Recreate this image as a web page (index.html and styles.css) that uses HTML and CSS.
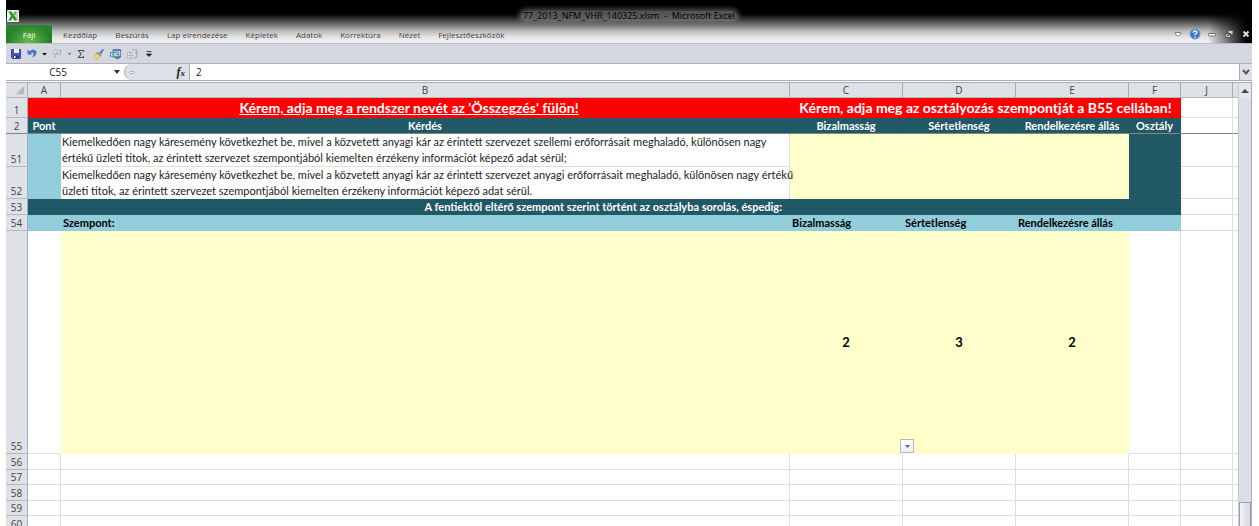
FILE: index.html
```html
<!DOCTYPE html>
<html lang="hu">
<head>
<meta charset="utf-8">
<title>77_2013_NFM_VHR_140325.xlsm - Microsoft Excel</title>
<link rel="stylesheet" href="styles.css">
</head>
<body>
<div class="window">
  <header class="top">
    <div class="titlebar">
      <svg class="logo" viewBox="0 0 12 12" aria-hidden="true"><rect width="12" height="12" rx="1" fill="#e9f5e7"/><rect x="8" y="2" width="3" height="8" fill="#b8dcb4"/><path d="M1.5 1.5h3l1.6 2.7L7.700 1.500h2.300L7.500 5.800l2.800 4.700H7.200L5.600 7.700 4 10.500H1.200l2.900-4.600z" fill="#2c9138"/><path d="M6 5.800L8 2h1.800L7.500 5.800z" fill="#75c34b"/></svg>
      <h1 class="title">77_2013_NFM_VHR_140325.xlsm&nbsp; -&nbsp; Microsoft Excel</h1>
    </div>
    <nav class="tabs">
      <button class="file">Fájl</button>
      <button>Kezdőlap</button><button>Beszúrás</button><button>Lap elrendezése</button><button>Képletek</button><button>Adatok</button><button>Korrektúra</button><button>Nézet</button><button>Fejlesztőeszközök</button>
      <div class="controls">
        <button aria-label="Menüszalag"><svg viewBox="0 0 12 12"><path d="M3.500 4.500h5v1.500L6 8.500 3.500 6z" fill="#fff" stroke="#777"/></svg></button>
        <button aria-label="Súgó"><svg viewBox="0 0 12 12"><circle cx="6" cy="6" r="5" fill="#3f78cb" stroke="#6f98d3"/><path d="M4.300 4.700c0-2.500 3.600-2.300 3.500-.1C7.700 5.800 6 5.800 6 7.300M6 8.500v1.200" fill="none" stroke="#fff" stroke-width="1.300"/></svg></button>
        <button aria-label="Kis méret"><svg viewBox="0 0 12 12"><rect x="2.500" y="5.500" width="7" height="2.500" rx=".5" fill="#fff" stroke="#777"/></svg></button>
        <button aria-label="Előző méret"><svg viewBox="0 0 12 12"><path d="M5 2.500h5v4H5zM2.500 5.500h5v4h-5z" fill="#ccc" stroke="#555"/><path d="M4 7.500h2" stroke="#555"/></svg></button>
        <button aria-label="Bezárás"><svg viewBox="0 0 12 12"><path d="M3.500 3.500l5 5m0-5l-5 5" stroke="#ddd" stroke-width="2"/></svg></button>
      </div>
    </nav>
  </header>
  <div class="quick">
    <button aria-label="Mentés"><svg viewBox="0 0 12 12"><path d="M1.500 1.500h9v9h-8l-1-1z" fill="#4259c0" stroke="#3446a0"/><path d="M4 1h5v4H4z" fill="#eef1ff"/><path d="M3.500 7.500h5v3h-5z" fill="#27347e"/><path d="M4 8h1.500v2H4z" fill="#fff"/></svg></button>
    <button aria-label="Visszavonás"><svg viewBox="0 0 12 12"><path d="M1.500 1.500v5h5L4.900 4.900C6.500 3.700 8.500 4.800 7 7.800L6 9.500C11 7.500 12 3 8.500 1.900 6.500 1.300 4.700 2 3.300 3.300z" fill="#4670cf"/></svg></button>
    <button class="narrow" aria-label="Visszavonási lista"><svg viewBox="2 0 5 12"><path d="M2 5h5L4.500 7.500z" fill="#111"/></svg></button>
    <button aria-label="Ismét"><svg viewBox="0 0 12 12"><path d="M9.500 2v4H5.500L7 4.700C5.300 3.500 3 5 5 9 .5 6 2 1.800 5.300 2c1.200.1 2 .6 2.800 1.300z" fill="#e4e7ec" stroke="#9a9fa9" stroke-width=".8"/></svg></button>
    <button class="narrow" aria-label="Ismétlési lista"><svg viewBox="2 0 5 12"><path d="M2.500 5h4L4.500 7z" fill="#777"/></svg></button>
    <button aria-label="AutoSzum"><svg viewBox="0 0 12 12"><path d="M7.500 4V2.500h-5L5.300 6 2.500 9.500h5V8" fill="none" stroke="#4a525e" stroke-width="1.100"/></svg></button>
    <button class="wide" aria-label="Formátummásoló"><svg viewBox="0 0 14 12"><path d="M11.500.5l1.500 1-3.500 5-2-1.500z" fill="#5877b9"/><path d="M5.500 3.500l5 3.500-1.500 2L4 5.500z" fill="#8b9ab3"/><path d="M4.500 5l4.500 3.500L6 11.500C4 11.500 2.500 10 1.500 8.500z" fill="#f5d55d" stroke="#c49a2a" stroke-width=".6"/></svg></button>
    <button class="wide" aria-label="Adatkapcsolat"><svg viewBox="0 0 14 12"><path d="M4.500 1.500h8v8h-8z" fill="#d8e5fa" stroke="#5c7eb5"/><path d="M4 1h9v2H4z" fill="#4778c6"/><path d="M1.500 4.500h9v4h-9z" fill="#eef5f0" stroke="#467ba0"/><path d="M3 5l3 3m0-3L3 8" stroke="#37924a"/><path d="M7 6.500h3" stroke="#467ba0"/><path d="M7 10l2.500 1L12.500 8" fill="none" stroke="#3269be" stroke-width="1.400"/></svg></button>
    <button class="wide" aria-label="Lap beszúrása"><svg viewBox="0 0 14 12"><path d="M1.500 4.500h8v6h-8zM1.500 7.500h8M4 4.500v6M6.500 4.500v6" fill="#eee" stroke="#a3a7ae" stroke-width=".8"/><path d="M6.500 1.500h5v8h-2" fill="#ddd" stroke="#a0a5af"/><path d="M11 1v5m-2-2l2 2 2-2" fill="none" stroke="#aaa"/></svg></button>
    <button aria-label="Eszköztár testreszabása"><svg viewBox="0 0 12 12"><path d="M3.500 3.500h5M3.500 6h5L6 8.500z" fill="#222" stroke="#222" stroke-width=".8"/></svg></button>
  </div>
  <div class="formula">
    <input class="namebox" aria-label="Névmező" value="C55">
    <button class="drop" aria-label="Nevek"><svg viewBox="0 0 8 8"><path d="M1 2h6L4 6z" fill="#333"/></svg></button>
    <div class="fxarea"><span class="grip"></span><button class="fx" aria-label="Függvény beszúrása">f<sub>x</sub></button></div>
    <input class="value" aria-label="Szerkesztőléc" value="2">
    <button class="expand" aria-label="Kibontás"><svg viewBox="0 0 12 12"><path d="M3 4l3 3.500L9 4" fill="none" stroke="#555" stroke-width="2"/></svg></button>
  </div>
  <main class="work">
    <table class="sheet">
      <colgroup><col class="c-num"><col class="c-a"><col><col class="c-mid"><col class="c-mid"><col class="c-mid"><col class="c-end"><col class="c-end"><col class="c-rest"></colgroup>
      <thead><tr class="letters"><th class="corner"><svg viewBox="0 0 12 12" aria-hidden="true"><path d="M11 1v10H1z" fill="#b5b9bf"/></svg></th><th>A</th><th>B</th><th>C</th><th>D</th><th>E</th><th>F</th><th>J</th><th></th></tr></thead>
      <tbody>
        <tr class="r-banner"><th>1</th><td colspan="2" class="red"><u>Kérem, adja meg a rendszer nevét az 'Összegzés' fülön!</u></td><td colspan="4" class="red">Kérem, adja meg az osztályozás szempontját a B55 cellában!</td><td></td><td></td></tr>
        <tr class="r-head"><th>2</th><td class="teal">Pont</td><td class="teal">Kérdés</td><td class="teal">Bizalmasság</td><td class="teal">Sértetlenség</td><td class="teal">Rendelkezésre állás</td><td class="teal">Osztály</td><td></td><td></td></tr>
        <tr class="r-text"><th>51</th><td class="blue"></td><td>Kiemelkedően nagy káresemény következhet be, mivel a közvetett anyagi kár az érintett szervezet szellemi erőforrásait meghaladó, különösen nagy<br>értékű üzleti titok, az érintett szervezet szempontjából kiemelten érzékeny információt képező adat sérül;</td><td class="yellow" colspan="3" rowspan="2"></td><td class="teal" rowspan="2"></td><td></td><td></td></tr>
        <tr class="r-text"><th>52</th><td class="blue"></td><td class="flush">Kiemelkedően nagy káresemény következhet be, mivel a közvetett anyagi kár az érintett szervezet anyagi erőforrásait meghaladó, különösen nagy értékű<br>üzleti titok, az érintett szervezet szempontjából kiemelten érzékeny információt képező adat sérül.</td><td></td><td></td></tr>
        <tr class="r-line"><th>53</th><td class="teal"></td><td class="teal right">A fentiektől eltérő szempont szerint történt az osztályba sorolás, éspedig:</td><td class="teal" colspan="4"></td><td></td><td></td></tr>
        <tr class="r-line"><th>54</th><td class="blue"></td><td class="blue">Szempont:</td><td class="blue">Bizalmasság</td><td class="blue">Sértetlenség</td><td class="blue">Rendelkezésre állás</td><td class="blue"></td><td></td><td></td></tr>
        <tr class="r-big"><th>55</th><td class="open"></td><td class="yellow"></td><td class="yellow score">2<button class="pick" aria-label="Érték választása"><svg viewBox="0 0 12 12"><path d="M4 5h5L6.500 8z" fill="#666"/></svg></button></td><td class="yellow score">3</td><td class="yellow score">2</td><td></td><td></td><td></td></tr>
        <tr class="r-tall"><th>56</th><td></td><td></td><td></td><td></td><td></td><td></td><td></td><td></td></tr>
        <tr class="r-short"><th>57</th><td></td><td></td><td></td><td></td><td></td><td></td><td></td><td></td></tr>
        <tr class="r-tall"><th>58</th><td></td><td></td><td></td><td></td><td></td><td></td><td></td><td></td></tr>
        <tr class="r-short"><th>59</th><td></td><td></td><td></td><td></td><td></td><td></td><td></td><td></td></tr>
        <tr class="r-tall"><th>60</th><td></td><td></td><td></td><td></td><td></td><td></td><td></td><td></td></tr>
      </tbody>
    </table>
    <div class="scroll">
      <button class="up" aria-label="Fel"><svg viewBox="0 0 12 12"><path d="M2 8h8L6 4z" fill="#444"/></svg></button>
      <div class="track"></div>
      <div class="thumb"></div>
    </div>
  </main>
</div>
</body>
</html>
```
FILE: styles.css
```css
* { box-sizing: border-box; }
body {
  margin: 0;
  height: 100vh;
  overflow: hidden;
  background: #fff;
  font-family: "Open Sans", "Noto Sans", sans-serif;
  font-size: 10px;
}
button, input {
  margin: 0;
  padding: 0;
  border: 0;
  border-radius: 0;
  background: none;
  font: inherit;
  color: inherit;
}
svg { display: block; }
.window {
  height: 100%;
  margin: 0 7px 0 6px;
  display: flex;
  flex-direction: column;
}

/* Title bar and ribbon tabs */
.top {
  flex: none;
  background:
    linear-gradient(to right, transparent calc(100% - 44px), #000 calc(100% - 6px)),
    linear-gradient(#000 0, #000 14px, #333 19px, #777 25px, #bbb 31px, #e4e4e4 37px, #f0f0f0 43px);
  border-bottom: 1px solid #b9bfc7;
}
.titlebar {
  height: 25px;
  display: grid;
  grid-template-columns: 14px 1fr 14px;
  align-items: center;
  padding-top: 6px;
}
.logo { width: 12px; height: 12px; margin-left: 1px; }
.title {
  margin: 0;
  justify-self: center;
  font-size: 9px;
  font-weight: 400;
  line-height: 10px;
  color: #000;
  padding: 0 2px;
  background: rgba(120, 120, 120, .7);
  box-shadow: 0 0 5px 2px rgba(120, 120, 120, .7);
  border-radius: 5px;
}
.tabs {
  height: 18px;
  display: flex;
  font-size: 8px;
  color: #444;
}
.tabs > button { padding: 0 9px; }
.tabs > .file {
  width: 46px;
  margin-right: 2px;
  color: #fff;
  background: radial-gradient(ellipse at 50% 100%, #6cc04a, transparent 70%), linear-gradient(#2a872f, #1f7a28);
}
.controls {
  margin-left: auto;
  display: flex;
  align-items: center;
  gap: 5px;
}
.controls svg { width: 12px; height: 12px; }

/* Quick access toolbar */
.quick {
  flex: none;
  height: 20px;
  display: flex;
  align-items: center;
  gap: 4px;
  padding-left: 4px;
  background: #d4d8de;
  border-bottom: 1px solid #adb2bc;
}
.quick svg { width: 12px; height: 12px; }
.quick .narrow svg { width: 5px; }
.quick .wide svg { width: 13px; }

/* Formula bar */
.formula {
  flex: none;
  height: 17px;
  display: flex;
  background: #fff;
  border-bottom: 1px solid #a9adb4;
  font-size: 10px;
  color: #222;
}
.namebox { width: 104px; text-align: center; }
.drop { width: 14px; }
.drop svg { width: 8px; height: 8px; margin: auto; }
.fxarea {
  width: 66px;
  display: flex;
  justify-content: space-between;
  align-items: center;
  padding: 0 4px;
  background: #dde1e7;
  border: 1px solid #a9adb4;
  border-width: 0 1px;
  border-radius: 8px 0 0 8px;
}
.grip {
  width: 5px;
  height: 3px;
  border: 1px solid #aaa;
  border-radius: 2px;
  background: #fff;
}
.fx { font: italic 700 12px/14px "Liberation Serif", serif; }
.fx sub { font-size: 9px; line-height: 1px; vertical-align: baseline; }
.value { flex: 1; min-width: 0; padding-left: 6px; }
.expand { width: 13px; background: #dde1e7; border-left: 1px solid #a9adb4; }
.expand svg { width: 12px; height: 12px; }

/* Worksheet */
.work {
  flex: 1;
  min-height: 0;
  display: flex;
  align-items: stretch;
  margin-top: 1px;
  border-top: 1px solid #a9adb4;
  overflow: hidden;
}
.sheet {
  flex: 1;
  width: 100%;
  min-width: 0;
  align-self: flex-start;
  table-layout: fixed;
  border-collapse: separate;
  border-spacing: 0;
}
.c-num { width: 22px; }
.c-a { width: 33px; }
.c-mid { width: 113px; }
.c-end { width: 52px; }
.c-rest { width: 5px; }
.sheet th, .sheet td {
  padding: 0;
  line-height: 14px;
  white-space: nowrap;
}
.sheet th {
  background: #dee1e6;
  border-right: 1px solid #a7adb6;
  border-bottom: 1px solid #b4b8bf;
  font-size: 10px;
  font-weight: 400;
  color: #444;
  vertical-align: bottom;
}
.sheet td {
  border-right: 1px solid #dedede;
  border-bottom: 1px solid #dedede;
  font-family: Lato, "Open Sans", sans-serif;
  font-size: 11px;
  color: #222;
}
.sheet tr > :last-child { border-right: 0; }
.letters th { height: 15px; }
.corner svg { width: 10px; height: 10px; margin: 0 2px 2px auto; }
.r-banner > * { height: 20px; }
.r-head > * { height: 16px; }
.sheet .r-head > * { border-bottom: 1px solid #808880; }
.r-text > * { height: 32px; }
.r-line > *, .r-tall > * { height: 16px; }
.r-big > * { height: 223px; }
.r-short > * { height: 15px; }
.sheet .red {
  background: #f00;
  border: 0;
  color: #fff;
  font-size: 14px;
  font-weight: 700;
  line-height: 18px;
  text-align: center;
}
.sheet .teal {
  background: #215967;
  border-color: #215967;
  color: #fff;
  font-weight: 700;
  text-align: center;
}
.sheet .r-head .teal { border-bottom-color: #808880; }
.sheet .teal.right { text-align: right; padding-right: 7px; }
.sheet .blue {
  background: #92cddc;
  border-color: #92cddc;
  color: #000;
  font-weight: 700;
}
.sheet .yellow { background: #ffc; border-color: #ffc; }
.sheet .r-text td { line-height: 16px; padding-left: 1px; }
.sheet .flush { border-bottom: 0; }
.sheet .r-line .blue { padding-left: 2px; }
.sheet .open { border-right-color: #fff; }
.sheet .score {
  position: relative;
  font-size: 13px;
  font-weight: 700;
  text-align: center;
  color: #000;
}
.pick {
  position: absolute;
  z-index: 1;
  right: -12px;
  bottom: 0;
  width: 14px;
  height: 14px;
  background: linear-gradient(#fff, #eceef5);
  border: 1px solid #b5b9bf;
}

/* Vertical scroll bar */
.scroll {
  flex: none;
  width: 14px;
  display: flex;
  flex-direction: column;
  background: #d9dee7;
  border-left: 1px solid #c5cad2;
  border-right: 1px solid #a9adb4;
}
.up { height: 15px; background: #e3e6ec; }
.up svg { width: 12px; height: 12px; }
.track { flex: 1; }
.thumb {
  height: 24px;
  background: linear-gradient(to right, #f2f4f8, #d5d9e1);
  border: 1px solid #9aa0aa;
  border-bottom: 0;
}
```
